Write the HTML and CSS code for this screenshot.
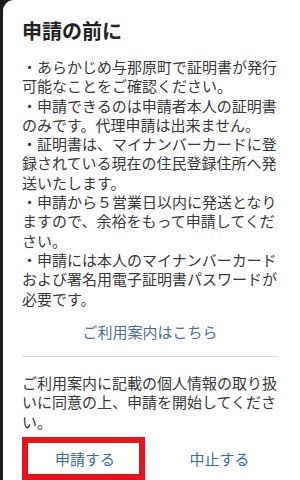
FILE: index.html
```html
<!DOCTYPE html>
<html lang="ja">
<head>
<meta charset="utf-8">
<link rel="stylesheet" href="styles.css">
</head>
<body>
<div class="card">
  <h1 class="title">申請の前に</h1>
  <div class="notes">
    <p>・あらかじめ与那原町で証明書が発行可能なことをご確認ください。</p>
    <p>・申請できるのは申請者本人の証明書のみです。代理申請は出来ません。</p>
    <p>・証明書は、マイナンバーカードに登録されている現在の住民登録住所へ発送いたします。</p>
    <p>・申請から５営業日以内に発送となりますので、余裕をもって申請してください。</p>
    <p>・申請には本人のマイナンバーカードおよび署名用電子証明書パスワードが必要です。</p>
  </div>
  <div class="guide"><a class="guide-link">ご利用案内はこちら</a></div>
  <hr class="divider">
  <p class="consent">ご利用案内に記載の個人情報の取り扱いに同意の上、申請を開始してください。</p>
  <div class="actions">
    <div class="btn btn-apply">申請する</div>
    <div class="btn btn-cancel">中止する</div>
  </div>
</div>
</body>
</html>
```
FILE: styles.css
```css
html, body {
  margin: 0;
  padding: 0;
  height: 100%;
  background: #1c1c1c;
  overflow: hidden;
}
body {
  padding-left: 3px;
  font-family: "Noto Sans CJK JP", "Noto Sans", sans-serif;
}
.card {
  background: #fff;
  height: 100%;
  border-top-left-radius: 11px;
  padding: 17px 22px 0 19px;
  box-sizing: border-box;
}
.title {
  margin: 0;
  font-size: 20px;
  line-height: 28px;
  font-weight: 700;
  color: #222;
}
.notes {
  margin-top: 12px;
  width: 256px;
}
.notes p, .consent {
  margin: 0;
  font-size: 15px;
  line-height: 19.3px;
  color: #383838;
}
.guide {
  margin-top: 14px;
  text-align: center;
  font-size: 15px;
  line-height: 19.3px;
}
.guide-link {
  color: #4f6c9c;
}
.divider {
  margin: 15px 0 0;
  border: 0;
  border-top: 1px solid #dcdcdc;
  width: 256px;
}
.consent {
  margin-top: 16px;
  width: 256px;
}
.actions {
  display: flex;
  gap: 10px;
  margin-top: 6px;
}
.btn {
  width: 125px;
  height: 43px;
  box-sizing: border-box;
  display: flex;
  align-items: center;
  justify-content: center;
  font-size: 15px;
  color: #3d67ad;
}
.btn-apply {
  border: 6px solid #e8121c;
  padding-left: 3px;
}
.btn-cancel {
  padding-left: 6px;
}
```
